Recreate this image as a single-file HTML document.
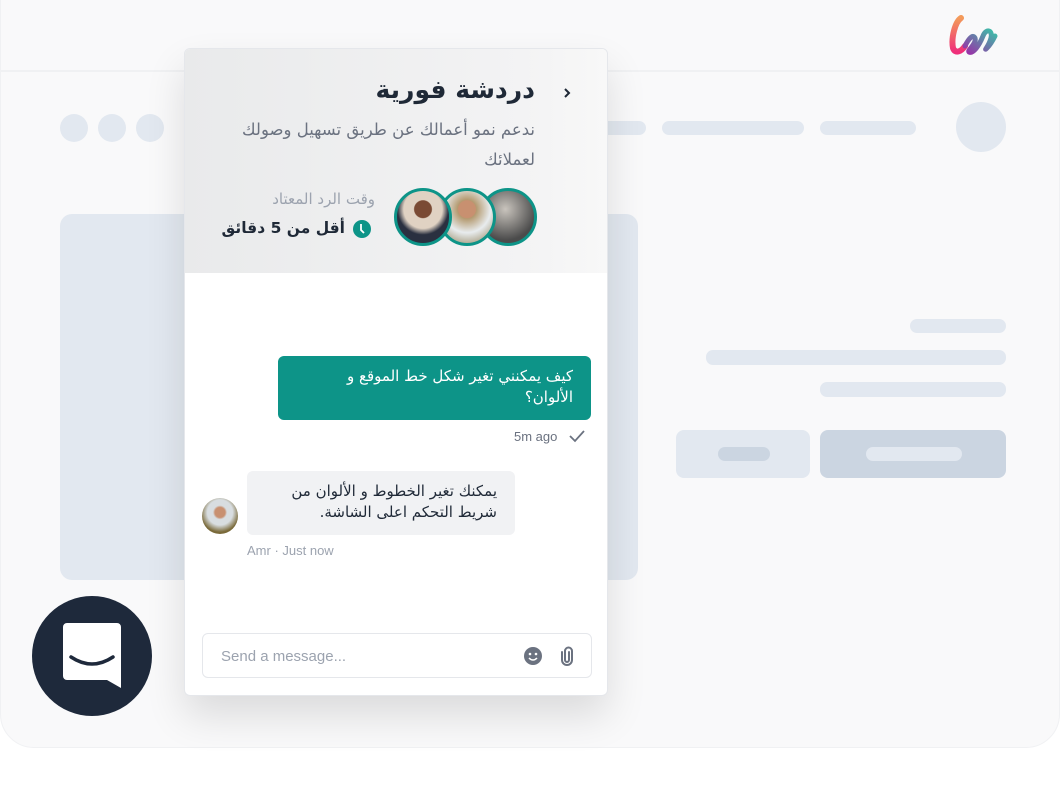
<!DOCTYPE html>
<html><head><meta charset="utf-8"><style>
*{margin:0;padding:0;box-sizing:border-box}
body{width:1060px;height:812px;background:#fff;position:relative;overflow:hidden;font-family:"Liberation Sans","DejaVu Sans",sans-serif}
.a{position:absolute}
.g{background:#e2e8f0}
.d{background:#cbd5e1}
.ar{font-family:"DejaVu Sans",sans-serif;direction:rtl}
</style></head><body>
<div class="a" style="left:0;top:-40px;width:1060px;height:788px;background:#f9f9fa;border-radius:34px;border:1px solid #f0f1f3"></div>
<div class="a" style="left:0;top:70px;width:1060px;height:2px;background:#f0f1f3"></div>
<svg class="a" style="left:945px;top:14px" width="56" height="44" viewBox="0 0 56 44">
<defs><linearGradient id="l1" x1="0" y1="0" x2="0" y2="1"><stop offset="0" stop-color="#f39a5a"/><stop offset="1" stop-color="#ef2f7a"/></linearGradient><linearGradient id="l2" x1="0" y1="1" x2="1" y2="0"><stop offset="0" stop-color="#9b2fa8"/><stop offset="1" stop-color="#3bbfa8"/></linearGradient></defs>
<path d="M16 4c-6 4-10 20-8 30 2 6 8 4 12-2" stroke="url(#l1)" stroke-width="6" fill="none" stroke-linecap="round"/>
<path d="M20 32c4-8 8-12 10-8 2 6-8 12-6 14 4 2 10-6 14-16 3-8 10-6 8 2-2 8-8 14-4 10 3-3 6-8 8-12" stroke="url(#l2)" stroke-width="5" fill="none" stroke-linecap="round"/>
</svg>
<div class="a g" style="left:60px;top:114px;width:28px;height:28px;border-radius:50%"></div>
<div class="a g" style="left:98px;top:114px;width:28px;height:28px;border-radius:50%"></div>
<div class="a g" style="left:136px;top:114px;width:28px;height:28px;border-radius:50%"></div>
<div class="a g" style="left:600px;top:121px;width:46px;height:14px;border-radius:7px"></div>
<div class="a g" style="left:662px;top:121px;width:142px;height:14px;border-radius:7px"></div>
<div class="a g" style="left:820px;top:121px;width:96px;height:14px;border-radius:7px"></div>
<div class="a g" style="left:956px;top:102px;width:50px;height:50px;border-radius:50%"></div>
<div class="a g" style="left:60px;top:214px;width:578px;height:366px;border-radius:12px"></div>
<div class="a g" style="left:910px;top:319px;width:96px;height:14px;border-radius:7px"></div>
<div class="a g" style="left:706px;top:350px;width:300px;height:15px;border-radius:7px"></div>
<div class="a g" style="left:820px;top:382px;width:186px;height:15px;border-radius:7px"></div>
<div class="a g" style="left:676px;top:430px;width:134px;height:48px;border-radius:8px"></div>
<div class="a d" style="left:718px;top:447px;width:52px;height:14px;border-radius:7px"></div>
<div class="a d" style="left:820px;top:430px;width:186px;height:48px;border-radius:8px"></div>
<div class="a g" style="left:866px;top:447px;width:96px;height:14px;border-radius:7px"></div>

<div class="a" style="left:184px;top:48px;width:424px;height:648px;background:#fff;border:1px solid #e5e7eb;border-radius:6px;box-shadow:0 20px 40px rgba(0,0,0,.12);overflow:hidden">
 <div class="a" style="left:0;top:0;width:424px;height:224px;background:linear-gradient(90deg,#e9eaeb,#f3f3f4 80%,#f8f8f8)"></div>
 <svg class="a" style="left:377px;top:37px" width="10" height="14" viewBox="0 0 10 14"><path d="M3 3l4 4-4 4" stroke="#1f2937" stroke-width="2" fill="none"/></svg>
 <div class="a ar" style="right:72px;top:26px;font-size:25px;font-weight:bold;color:#1f2937">دردشة فورية</div>
 <div class="a ar" style="right:72px;top:66px;width:320px;font-size:16.5px;line-height:30px;color:#6b7280;text-align:right">ندعم نمو أعمالك عن طريق تسهيل وصولك لعملائك</div>
 <div class="a ar" style="right:232px;top:141px;font-size:15px;color:#9ca3af">وقت الرد المعتاد</div>
 <div class="a ar" style="right:262px;top:170px;font-size:15.5px;font-weight:bold;color:#1f2937">أقل من 5 دقائق</div>
 <svg class="a" style="left:168px;top:171px" width="18" height="18" viewBox="0 0 18 18"><circle cx="9" cy="9" r="9" fill="#0d9488"/><path d="M8 4v6l3 3" stroke="#fff" stroke-width="1.8" fill="none"/></svg>
 <div class="a" style="left:294px;top:139px;width:58px;height:58px;border-radius:50%;border:3px solid #0d9488;background:radial-gradient(circle at 45% 35%,#c9c4bd,#4b4b4b 70%)"></div>
 <div class="a" style="left:253px;top:139px;width:58px;height:58px;border-radius:50%;border:3px solid #0d9488;background:radial-gradient(circle at 50% 35%,#c89070 0 20%,#b49a70 22%,#e8ecee 55%,#8a7a50)"></div>
 <div class="a" style="left:209px;top:139px;width:58px;height:58px;border-radius:50%;border:3px solid #0d9488;background:radial-gradient(circle at 50% 35%,#7a4a34 0 20%,#e0d2c3 22% 45%,#2a3040 60%)"></div>
 <div class="a ar" style="left:93px;top:307px;width:313px;height:64px;background:#0d9488;border-radius:6px;color:#fff;font-size:15px;line-height:21px;padding:10px 18px 0 18px;text-align:right"><span style="display:block;width:250px;margin-left:auto">كيف يمكنني تغير شكل خط الموقع و الألوان؟</span></div>
 <div class="a" style="left:329px;top:380px;font-size:13px;color:#6b7280">5m ago</div>
 <svg class="a" style="left:383px;top:380px" width="18" height="14" viewBox="0 0 18 14"><path d="M2 7l5 5 9-10" stroke="#6b7280" stroke-width="1.8" fill="none"/></svg>
 <div class="a ar" style="left:62px;top:422px;width:268px;height:64px;background:#f1f2f4;border-radius:6px;color:#1f2937;font-size:15px;line-height:21px;padding:10px 18px 0 18px;text-align:right">يمكنك تغير الخطوط و الألوان من شريط التحكم اعلى الشاشة.</div>
 <div class="a" style="left:17px;top:449px;width:36px;height:36px;border-radius:50%;background:radial-gradient(circle at 50% 40%,#c89070 0 18%,#d8dde0 25% 45%,#7a6a3a 70%)"></div>
 <div class="a" style="left:62px;top:494px;font-size:13px;color:#9ca3af">Amr · Just now</div>
 <div class="a" style="left:17px;top:584px;width:390px;height:45px;border:1px solid #e5e7eb;border-radius:6px"></div>
 <div class="a" style="left:36px;top:599px;font-size:15px;color:#9ca3af">Send a message...</div>
 <svg class="a" style="left:338px;top:597px" width="20" height="20" viewBox="0 0 20 20"><circle cx="10" cy="10" r="9" fill="#6b7280"/><circle cx="7" cy="8" r="1.3" fill="#fff"/><circle cx="13" cy="8" r="1.3" fill="#fff"/><path d="M6 12q4 4 8 0" stroke="#fff" stroke-width="1.5" fill="none"/></svg>
 <svg class="a" style="left:374px;top:596px" width="16" height="22" viewBox="0 0 16 22"><path d="M10 7v8a2 2 0 0 1-4 0V6" stroke="#6b7280" stroke-width="2" fill="none" stroke-linecap="round"/><path d="M6 6a3 3 0 0 1 7 0v9a5 5 0 0 1-10 0V7" stroke="#6b7280" stroke-width="2" fill="none" stroke-linecap="round"/></svg>
</div>

<div class="a" style="left:32px;top:596px;width:120px;height:120px;border-radius:50%;background:#1e293b"></div>
<svg class="a" style="left:63px;top:623px" width="58" height="66" viewBox="0 0 58 66"><path d="M4 0h50a4 4 0 0 1 4 4v61l-14-8H4a4 4 0 0 1-4-4V4a4 4 0 0 1 4-4z" fill="#fff"/><path d="M8 34q21 14 42 0" stroke="#1e293b" stroke-width="3.5" fill="none" stroke-linecap="round"/></svg>
</body></html>
